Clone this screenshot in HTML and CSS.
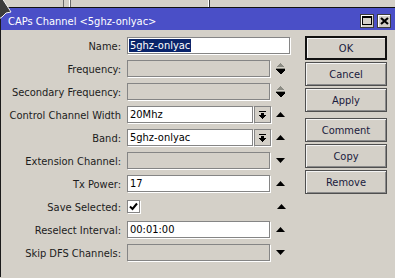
FILE: index.html
```html
<!DOCTYPE html>
<html>
<head>
<meta charset="utf-8">
<link rel="stylesheet" href="styles.css">
</head>
<body>
<div class="desk"></div>
<svg class="cursor" width="14" height="22" viewBox="0 0 14 22"><polygon points="0,0 3,0 12,14 7,15 3,19 0,21" fill="#3b3b3b" stroke="#f4f4f4" stroke-width="1"/></svg>
<div class="win">
  <div class="titlebar">
    <span class="title">CAPs Channel &lt;5ghz-onlyac&gt;</span>
    <div class="tbtns">
      <span class="tb"><svg width="10" height="9" viewBox="0 0 10 9" shape-rendering="crispEdges"><rect x="0.5" y="0.5" width="9" height="8" fill="none" stroke="#000"/><rect x="0" y="0" width="10" height="2" fill="#000"/></svg></span>
      <span class="tb"><svg width="9" height="8" viewBox="0 0 9 8"><path d="M1 1 L8 7 M8 1 L1 7" stroke="#000" stroke-width="2.2"/></svg></span>
    </div>
  </div>
  <div class="body">
    <div class="form">
      <div class="row"><label class="lbl">Name:</label><div class="field name"><span class="sel">5ghz-onlyac</span></div></div>
      <div class="row"><label class="lbl">Frequency:</label><div class="field dis"></div><span class="arr"><svg width="9" height="12" viewBox="0 0 9 12" shape-rendering="crispEdges"><polygon points="4.5,0 9,4 0,4" fill="#8c8c84"/><rect x="0" y="5" width="9" height="1" fill="#8c8c84"/><rect x="0" y="6" width="9" height="1" fill="#000"/><polygon points="0,7 9,7 4.5,11.5" fill="#000"/></svg></span></div>
      <div class="row"><label class="lbl">Secondary Frequency:</label><div class="field dis"></div><span class="arr"><svg width="9" height="12" viewBox="0 0 9 12" shape-rendering="crispEdges"><polygon points="4.5,0 9,4 0,4" fill="#8c8c84"/><rect x="0" y="5" width="9" height="1" fill="#8c8c84"/><rect x="0" y="6" width="9" height="1" fill="#000"/><polygon points="0,7 9,7 4.5,11.5" fill="#000"/></svg></span></div>
      <div class="row"><label class="lbl">Control Channel Width</label><div class="dd"><div class="field ddtext">20Mhz</div><span class="ddbtn"><svg width="7" height="8" viewBox="0 0 7 8" shape-rendering="crispEdges"><rect x="0" y="0" width="7" height="1" fill="#000"/><rect x="2" y="2" width="3" height="2" fill="#000"/><polygon points="0,4 7,4 3.5,7.6" fill="#000"/></svg></span></div><span class="arr"><svg width="9" height="5" viewBox="0 0 9 5"><polygon points="4.5,0 9,5 0,5" fill="#000"/></svg></span></div>
      <div class="row"><label class="lbl">Band:</label><div class="dd"><div class="field ddtext">5ghz-onlyac</div><span class="ddbtn"><svg width="7" height="8" viewBox="0 0 7 8" shape-rendering="crispEdges"><rect x="0" y="0" width="7" height="1" fill="#000"/><rect x="2" y="2" width="3" height="2" fill="#000"/><polygon points="0,4 7,4 3.5,7.6" fill="#000"/></svg></span></div><span class="arr"><svg width="9" height="5" viewBox="0 0 9 5"><polygon points="4.5,0 9,5 0,5" fill="#000"/></svg></span></div>
      <div class="row"><label class="lbl">Extension Channel:</label><div class="field dis"></div><span class="arr"><svg width="9" height="5" viewBox="0 0 9 5"><polygon points="0,0 9,0 4.5,5" fill="#000"/></svg></span></div>
      <div class="row"><label class="lbl">Tx Power:</label><div class="field">17</div><span class="arr"><svg width="9" height="5" viewBox="0 0 9 5"><polygon points="4.5,0 9,5 0,5" fill="#000"/></svg></span></div>
      <div class="row"><label class="lbl">Save Selected:</label><div class="chkwrap"><span class="chk"><svg width="9" height="9" viewBox="0 0 9 9"><path d="M1 4.5 L3.5 7 L8 1.5" fill="none" stroke="#000" stroke-width="2"/></svg></span></div><span class="arr"><svg width="9" height="5" viewBox="0 0 9 5"><polygon points="4.5,0 9,5 0,5" fill="#000"/></svg></span></div>
      <div class="row"><label class="lbl">Reselect Interval:</label><div class="field">00:01:00</div><span class="arr"><svg width="9" height="5" viewBox="0 0 9 5"><polygon points="4.5,0 9,5 0,5" fill="#000"/></svg></span></div>
      <div class="row"><label class="lbl">Skip DFS Channels:</label><div class="field dis"></div><span class="arr"><svg width="9" height="5" viewBox="0 0 9 5"><polygon points="0,0 9,0 4.5,5" fill="#000"/></svg></span></div>
    </div>
    <div class="btns">
      <div class="btn def">OK</div>
      <div class="btn">Cancel</div>
      <div class="btn">Apply</div>
      <div class="btn sep">Comment</div>
      <div class="btn">Copy</div>
      <div class="btn">Remove</div>
    </div>
  </div>
</div>
</body>
</html>
```
FILE: styles.css
```css
html, body {
  margin: 0;
  padding: 0;
}
body {
  width: 395px;
  height: 278px;
  overflow: hidden;
  background: #d4d0c8;
  font-family: "DejaVu Sans Condensed", "Liberation Sans", sans-serif;
  font-size: 11px;
  color: #1c1c1c;
  position: relative;
}
.desk {
  height: 7px;
  background:
    linear-gradient(to right, transparent 63px, #6b6b6b 63px, #6b6b6b 64px, transparent 64px, transparent 69px, #ffffff 69px, #ffffff 70px, #6b6b6b 70px, #6b6b6b 71px, transparent 71px, transparent 208px, #ffffff 208px, #ffffff 209px, #3a3a3a 209px, #3a3a3a 210px, transparent 210px),
    #d4d0c8;
}
.cursor {
  position: absolute;
  left: -1px;
  top: -2px;
  z-index: 5;
}
.win {
  border-top: 1px solid #111;
  border-left: 1px solid #1a1a1a;
  height: 270px;
  box-sizing: border-box;
}
.titlebar {
  height: 22px;
  background: #4a4fc7;
  display: flex;
  align-items: center;
  justify-content: space-between;
  padding: 1px 4px 0 7px;
  box-sizing: border-box;
}
.title {
  color: #fff;
  font-size: 11px;
  padding-top: 3px;
}
.tbtns {
  display: flex;
  gap: 3px;
  padding-top: 2px;
}
.tb {
  width: 14px;
  height: 14px;
  box-sizing: border-box;
  background: #d4d0c8;
  border: 1px solid #3c3c3c;
  box-shadow: inset 1px 1px 0 #fff;
  display: flex;
  align-items: center;
  justify-content: center;
}
.body {
  display: flex;
  padding-top: 6px;
}
.form {
  display: flex;
  flex-direction: column;
  gap: 6px;
  padding-top: 1px;
  width: 285px;
}
.row {
  display: flex;
  align-items: center;
  height: 17px;
}
.lbl {
  width: 120px;
  margin-right: 6px;
  text-align: right;
  white-space: nowrap;
  flex: none;
  padding-top: 1px;
}
.field {
  width: 143px;
  height: 17px;
  box-sizing: border-box;
  border: 1px solid #858585;
  box-shadow: 1px 1px 0 #fff;
  background: #fff;
  padding: 0 2px;
  line-height: 15px;
  color: #000;
  flex: none;
  white-space: nowrap;
}
.field.dis {
  background: #d4d0c8;
}
.field.name {
  width: 163px;
  padding: 1px 1px;
  line-height: 13px;
}
.sel {
  display: inline-block;
  background: #0a246a;
  color: #fff;
  padding: 0 1px;
}
.dd {
  display: flex;
  gap: 1px;
  width: 144px;
  flex: none;
}
.field.ddtext {
  width: 126px;
}
.ddbtn {
  width: 17px;
  height: 17px;
  box-sizing: border-box;
  border: 1px solid #858585;
  box-shadow: 1px 1px 0 #fff;
  display: flex;
  align-items: center;
  justify-content: center;
}
.arr {
  width: 9px;
  margin-left: 6px;
  display: flex;
  align-items: center;
  justify-content: center;
}
.dd + .arr {
  margin-left: 5px;
}
.chkwrap {
  width: 144px;
  flex: none;
  display: flex;
  align-items: center;
}
.chk {
  width: 13px;
  height: 13px;
  box-sizing: border-box;
  border: 1px solid #858585;
  box-shadow: 1px 1px 0 #fff;
  background: #fff;
  display: flex;
  align-items: center;
  justify-content: center;
}
.btns {
  margin-left: 19px;
  display: flex;
  flex-direction: column;
  gap: 2px;
}
.btn {
  width: 82px;
  height: 24px;
  box-sizing: border-box;
  border: 1px solid #4f4f4f;
  box-shadow: inset 1px 1px 0 #f4f4f4, inset -1px -1px 0 #8a8a8a;
  display: flex;
  align-items: center;
  justify-content: center;
  color: #1a1a3c;
}
.btn.def {
  border: 2px solid #111;
  box-shadow: inset 1px 1px 0 #f4f4f4;
}
.btn.sep {
  margin-top: 4px;
}
```
